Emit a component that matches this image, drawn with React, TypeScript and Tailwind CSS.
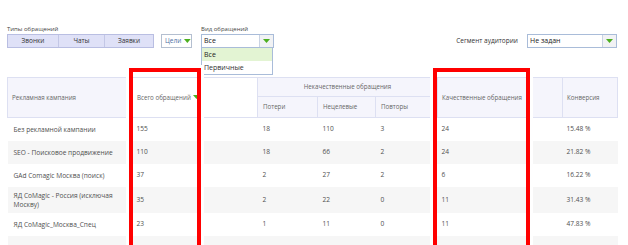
import React from "react"

const rows = [
  ["Без рекламной кампании", "155", "18", "110", "3", "24", "15.48 %"],
  ["SEO - Поисковое продвижение", "110", "18", "66", "2", "24", "21.82 %"],
  ["GAd Comagic Москва (поиск)", "37", "2", "27", "2", "6", "16.22 %"],
  ["ЯД CoMagic - Россия (исключая Москву)", "35", "2", "22", "0", "11", "31.43 %"],
  ["ЯД CoMagic_Москва_Спец", "23", "1", "11", "0", "11", "47.83 %"],
  ["", "", "", "", "", "", ""],
]

function Arrow() {
  return (
    <svg width="7" height="4" viewBox="0 0 7 4">
      <path d="M0 0h7L3.5 4z" fill="#4caf1f" />
    </svg>
  )
}

function Select({ value, width }: { value: string; width: string }) {
  return (
    <div className={`flex h-[14px] ${width} border border-[#a9bcd9] bg-white`}>
      <div className="flex-1 pl-[2px] text-[7px] leading-[12px] text-[#222]">{value}</div>
      <div className="w-[14px] border-l border-[#c9d3e3] bg-[#f1f2f4] flex items-center justify-center">
        <Arrow />
      </div>
    </div>
  )
}

export default function App() {
  return (
    <div
      className="relative w-[628px] h-[245px] overflow-hidden bg-white text-[#555]"
      style={{ fontFamily: "'Open Sans', 'DejaVu Sans', sans-serif" }}
    >
      {/* toolbar */}
      <div className="flex items-end pt-[24px] pl-[7px] pr-[11px]">
        <div className="flex flex-col">
          <span className="text-[6px] leading-[10px] text-[#444]">Типы обращений</span>
          <div className="flex h-[14px] w-[147px] border border-[#b9bee2] bg-[#dfe1f7] text-[6.5px] leading-[12px] text-[#333]">
            <div className="w-[51px] text-center border-r border-[#c3c7e6]">Звонки</div>
            <div className="w-[46px] text-center border-r border-[#c3c7e6]">Чаты</div>
            <div className="flex-1 text-center">Заявки</div>
          </div>
        </div>

        <div className="ml-[7px] flex h-[14px] w-[31px] items-center gap-[3px] border border-[#b4bfd0] bg-white pl-[3px] text-[6.5px] text-[#4d6fa3]">
          <span>Цели</span>
          <Arrow />
        </div>

        <div className="relative ml-[9px] flex flex-col">
          <span className="text-[6px] leading-[10px] text-[#444]">Вид обращений</span>
          <Select value="Все" width="w-[73px]" />
          <div className="absolute left-0 top-[24px] w-[72px] border border-t-0 border-[#a9bcd9] bg-white text-[7px] leading-[13px] text-[#333]">
            <div className="bg-[#e3f4d3] pl-[2px] text-[#222]">Все</div>
            <div className="pl-[2px]">Первичные</div>
          </div>
        </div>

        <div className="ml-auto flex items-center">
          <span className="mr-[9px] text-[6.5px] text-[#333]">Сегмент аудитории</span>
          <Select value="Не задан" width="w-[90px]" />
        </div>
      </div>

      {/* table */}
      <table className="mt-[29px] ml-[7px] w-[610px] table-fixed border-collapse">
        <colgroup>
          <col className="w-[123px]" />
          <col className="w-[127px]" />
          <col className="w-[60px]" />
          <col className="w-[58px]" />
          <col className="w-[62px]" />
          <col className="w-[125px]" />
          <col className="w-[55px]" />
        </colgroup>
        <thead className="text-left text-[6.2px] text-[#666]">
          <tr className="h-[19px]">
            <th rowSpan={2} className="border border-[#dde0f2] bg-[#f5f5fc] pl-[4px] font-normal">Рекламная кампания</th>
            <th rowSpan={2} className="border border-[#dde0f2] border-l-0 bg-white pl-[6px] font-normal">
              <span className="inline-flex items-center gap-[2px]">
                Всего обращений <Arrow />
              </span>
            </th>
            <th colSpan={3} className="border border-[#dde0f2] bg-[#f5f5fc] text-center font-normal">Некачественные обращения</th>
            <th rowSpan={2} className="border border-[#dde0f2] bg-[#f5f5fc] pl-[4px] font-normal">Качественные обращения</th>
            <th rowSpan={2} className="border border-[#dde0f2] bg-[#f5f5fc] pl-[4px] font-normal">Конверсия</th>
          </tr>
          <tr className="h-[21px]">
            <th className="border border-t-0 border-[#dde0f2] bg-[#f5f5fc] pl-[5px] font-normal">Потери</th>
            <th className="border border-[#dde0f2] bg-[#f5f5fc] pl-[5px] font-normal">Нецелевые</th>
            <th className="border border-[#dde0f2] bg-[#f5f5fc] pl-[5px] font-normal">Повторы</th>
          </tr>
        </thead>
        <tbody className="text-[6.6px] text-[#4f4f4f]">
          {rows.map((r, i) => (
            <tr key={i} className={i % 2 === 1 ? "bg-[#f6f6f6]" : "bg-white"}>
              <td className="h-[23px] py-[4px] pl-[6px] pr-[10px] leading-[9px]">{r[0]}</td>
              <td className="pl-[6px]">{r[1]}</td>
              <td className="pl-[5px]">{r[2]}</td>
              <td className="pl-[5px]">{r[3]}</td>
              <td className="pl-[5px]">{r[4]}</td>
              <td className="pl-[4px]">{r[5]}</td>
              <td className="pl-[4px]">{r[6]}</td>
            </tr>
          ))}
        </tbody>
      </table>

      {/* red highlight boxes */}
      <div className="absolute left-[129px] top-[68px] h-[200px] w-[72px] border-4 border-[#ff0000] shadow-[0_0_0_3px_white]" />
      <div className="absolute left-[433px] top-[68px] h-[200px] w-[97px] border-4 border-[#ff0000] shadow-[0_0_0_3px_white]" />
    </div>
  )
}
